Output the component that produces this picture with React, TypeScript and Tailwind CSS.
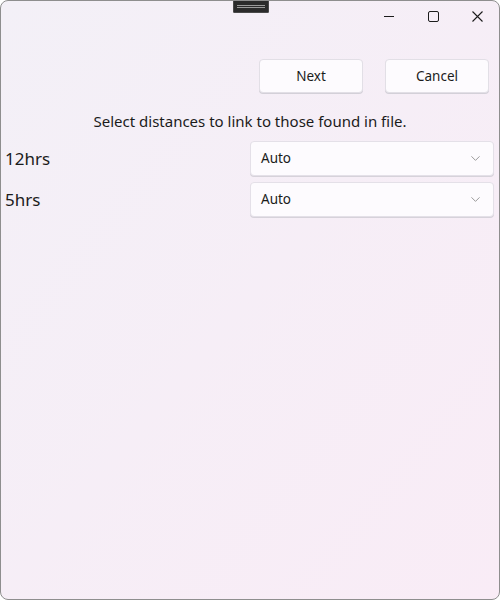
import { ChevronDown } from "lucide-react";

const ROWS = ["12hrs", "5hrs"];

function CaptionButtons() {
  return (
    <div className="flex h-[30px] items-center">
      <div className="flex h-full w-[44px] items-center justify-center">
        <svg width="10" height="10" viewBox="0 0 10 10" aria-hidden>
          <path d="M0 5.5h10" stroke="#1c1c1c" strokeWidth="1" />
        </svg>
      </div>
      <div className="flex h-full w-[44px] items-center justify-center">
        <svg width="11" height="11" viewBox="0 0 11 11" aria-hidden>
          <rect x="0.5" y="0.5" width="10" height="10" rx="1.5" fill="none" stroke="#1c1c1c" strokeWidth="1" />
        </svg>
      </div>
      <div className="flex h-full w-[44px] items-center justify-center">
        <svg width="11" height="11" viewBox="0 0 11 11" aria-hidden>
          <path d="M0.5 0.5l10 10M10.5 0.5l-10 10" stroke="#1c1c1c" strokeWidth="1.1" />
        </svg>
      </div>
    </div>
  );
}

export default function App() {
  return (
    <div
      className="relative h-[600px] w-[500px] overflow-hidden rounded-lg border border-[#8e8e8e] bg-gradient-to-br from-[#f3f0f7] to-[#f9ecf6] text-[#1b1b1b]"
      style={{ fontFamily: '"Noto Sans", "Open Sans", sans-serif' }}
    >
      {/* drag handle */}
      <div className="absolute left-[232px] top-[-1px] flex h-[13px] w-[36px] flex-col items-center justify-center gap-[1px] rounded-b-[1px] border border-[#4a4a4a] bg-[#2b2b2b]">
        <span className="h-px w-[28px] bg-[#9a9a9a]" />
        <span className="h-px w-[28px] bg-[#9a9a9a]" />
      </div>

      <div className="flex justify-end">
        <CaptionButtons />
      </div>

      <div className="mt-[28px] flex justify-end gap-[22px] pr-[10px]">
        <button className="h-[34px] w-[104px] rounded-[4px] border border-[#e2dfe6] bg-[#fdfbfe] text-[13.5px] text-[#1b1b1b] shadow-[0_1px_0_#d3d0d8]">
          Next
        </button>
        <button className="h-[34px] w-[104px] rounded-[4px] border border-[#e2dfe6] bg-[#fdfbfe] text-[13.5px] text-[#1b1b1b] shadow-[0_1px_0_#d3d0d8]">
          Cancel
        </button>
      </div>

      <p className="mt-[18px] text-center text-[15px] leading-[20px] text-[#1b1b1b]">
        Select distances to link to those found in file.
      </p>

      <div className="mt-[10px] flex flex-col gap-[6px]">
        {ROWS.map((r) => (
          <div key={r} className="flex items-center justify-between pl-[4px] pr-[5px]">
            <span className="text-[17px] leading-[24px] text-[#1b1b1b]">{r}</span>
            <div className="flex h-[35px] w-[244px] items-center justify-between rounded-[4px] border border-[#e4e0e8] bg-[#fdfbfe] pl-[10px] pr-[10px] shadow-[0_1px_0_#d6d2da]">
              <span className="text-[13.5px] text-[#1b1b1b]">Auto</span>
              <ChevronDown size={15} strokeWidth={1.2} color="#7a7a7a" />
            </div>
          </div>
        ))}
      </div>
    </div>
  );
}
